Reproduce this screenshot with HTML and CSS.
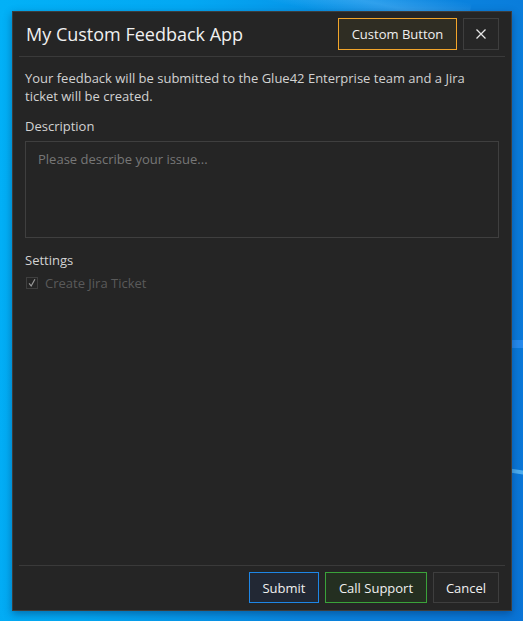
FILE: index.html
```html
<!DOCTYPE html>
<html lang="en">
<head>
<meta charset="utf-8">
<title>My Custom Feedback App</title>
<link rel="stylesheet" href="styles.css">
</head>
<body>
<div class="desktop">
  <div class="beam beam-a"></div>
  <div class="beam beam-b"></div>
  <div class="beam beam-c"></div>
  <div class="dialog">
    <header class="dialog-header">
      <h1 class="title">My Custom Feedback App</h1>
      <div class="header-actions">
        <button class="btn btn-custom">Custom Button</button>
        <button class="btn btn-close" aria-label="Close">
          <svg width="12" height="12" viewBox="0 0 12 12"><path d="M1.5 1.5 L10.5 10.5 M10.5 1.5 L1.5 10.5" stroke="#e6e6e6" stroke-width="1.3" fill="none"/></svg>
        </button>
      </div>
    </header>
    <main class="dialog-body">
      <p class="intro">Your feedback will be submitted to the Glue42 Enterprise team and a Jira ticket will be created.</p>
      <label class="label" for="desc">Description</label>
      <textarea id="desc" class="textarea" placeholder="Please describe your issue..."></textarea>
      <div class="label settings">Settings</div>
      <div class="check-row">
        <span class="check">
          <svg width="12" height="12" viewBox="0 0 12 12"><path d="M2.5 6.5 L5 9.5 L9.5 1.5" stroke="#9a9a9a" stroke-width="1.4" fill="none"/></svg>
        </span>
        <span class="check-label">Create Jira Ticket</span>
      </div>
    </main>
    <footer class="dialog-footer">
      <button class="btn btn-submit">Submit</button>
      <button class="btn btn-support">Call Support</button>
      <button class="btn btn-cancel">Cancel</button>
    </footer>
  </div>
</div>
</body>
</html>
```
FILE: styles.css
```css
html, body {
  margin: 0;
  padding: 0;
  height: 100%;
}
body {
  font-family: "Open Sans", "Liberation Sans", sans-serif;
}
.desktop {
  position: relative;
  width: 523px;
  height: 621px;
  overflow: hidden;
  background: linear-gradient(100deg, #02b1f7 0%, #03a8f3 30%, #0a86e0 65%, #0a74d6 100%);
  padding: 11px 0 0 12px;
  box-sizing: border-box;
}
.beam {
  position: absolute;
  pointer-events: none;
}
.beam-a {
  left: 250px; top: -20px; width: 220px; height: 40px;
  background: linear-gradient(180deg, rgba(255,255,255,0) 0%, rgba(120,200,255,0.35) 50%, rgba(255,255,255,0) 100%);
  transform: rotate(12deg);
}
.beam-b {
  left: 505px; top: 340px; width: 30px; height: 8px;
  background: rgba(40,140,240,0.9);
}
.beam-c {
  left: 505px; top: 470px; width: 30px; height: 4px;
  background: rgba(120,210,255,0.6);
  transform: rotate(8deg);
}
.dialog {
  position: relative;
  width: 500px;
  height: 600px;
  box-sizing: border-box;
  background: #252525;
  border: 1px solid #3d3d3d;
  box-shadow: 0 3px 8px rgba(0, 40, 90, 0.45);
  display: flex;
  flex-direction: column;
}
.dialog-header {
  margin: 0 6px;
  padding: 6px 6px 6px 7px;
  border-bottom: 1px solid #3a3a3a;
  display: flex;
  align-items: center;
  justify-content: space-between;
}
.title {
  margin: 0;
  font-size: 18px;
  font-weight: 500;
  color: #f0f0f0;
  line-height: 24px;
}
.header-actions {
  display: flex;
  gap: 6px;
}
.btn {
  font-family: inherit;
  font-size: 13px;
  font-weight: 500;
  color: #f0f0f0;
  background: #262626;
  border: 1px solid #3e3e3e;
  height: 32px;
  padding: 0;
  box-sizing: border-box;
  cursor: pointer;
  white-space: nowrap;
  display: flex;
  align-items: center;
  justify-content: center;
}
.btn-custom {
  width: 119px;
  border-color: #f2a52a;
  background: #2f2d23;
}
.btn-close {
  width: 36px;
}
.dialog-body {
  flex: 1;
  padding: 12px 12px 0 12px;
  display: flex;
  flex-direction: column;
}
.intro {
  margin: 0;
  font-size: 13px;
  line-height: 18px;
  color: #d2d2d2;
  padding-right: 20px;
}
.label {
  display: block;
  margin-top: 12px;
  font-size: 13px;
  line-height: 18px;
  color: #d2d2d2;
}
.textarea {
  margin-top: 6px;
  height: 97px;
  box-sizing: border-box;
  background: #252525;
  border: 1px solid #3f3f3f;
  border-radius: 0;
  padding: 8px 12px;
  font-family: inherit;
  font-size: 13px;
  line-height: 18px;
  color: #d2d2d2;
  resize: none;
  outline: none;
}
.textarea::placeholder {
  color: #777;
}
.settings {
  margin-top: 13px;
}
.check-row {
  margin-top: 5px;
  display: flex;
  align-items: center;
  gap: 7px;
  height: 18px;
}
.check {
  width: 12px;
  height: 12px;
  box-sizing: border-box;
  border: 1px solid #3f3f3f;
  display: flex;
  align-items: center;
  justify-content: center;
  margin-left: 1px;
}
.check svg {
  display: block;
}
.check-label {
  font-size: 13px;
  color: #5a5a5a;
}
.dialog-footer {
  margin: 0 6px;
  padding: 6px 6px 7px 0;
  border-top: 1px solid #3a3a3a;
  display: flex;
  justify-content: flex-end;
  gap: 6px;
}
.dialog-footer .btn {
  height: 31px;
}
.btn-submit {
  width: 70px;
  border-color: #1e86e6;
  background: #222834;
}
.btn-support {
  width: 102px;
  border-color: #3aa23a;
  background: #242f21;
}
.btn-cancel {
  width: 66px;
}
```
